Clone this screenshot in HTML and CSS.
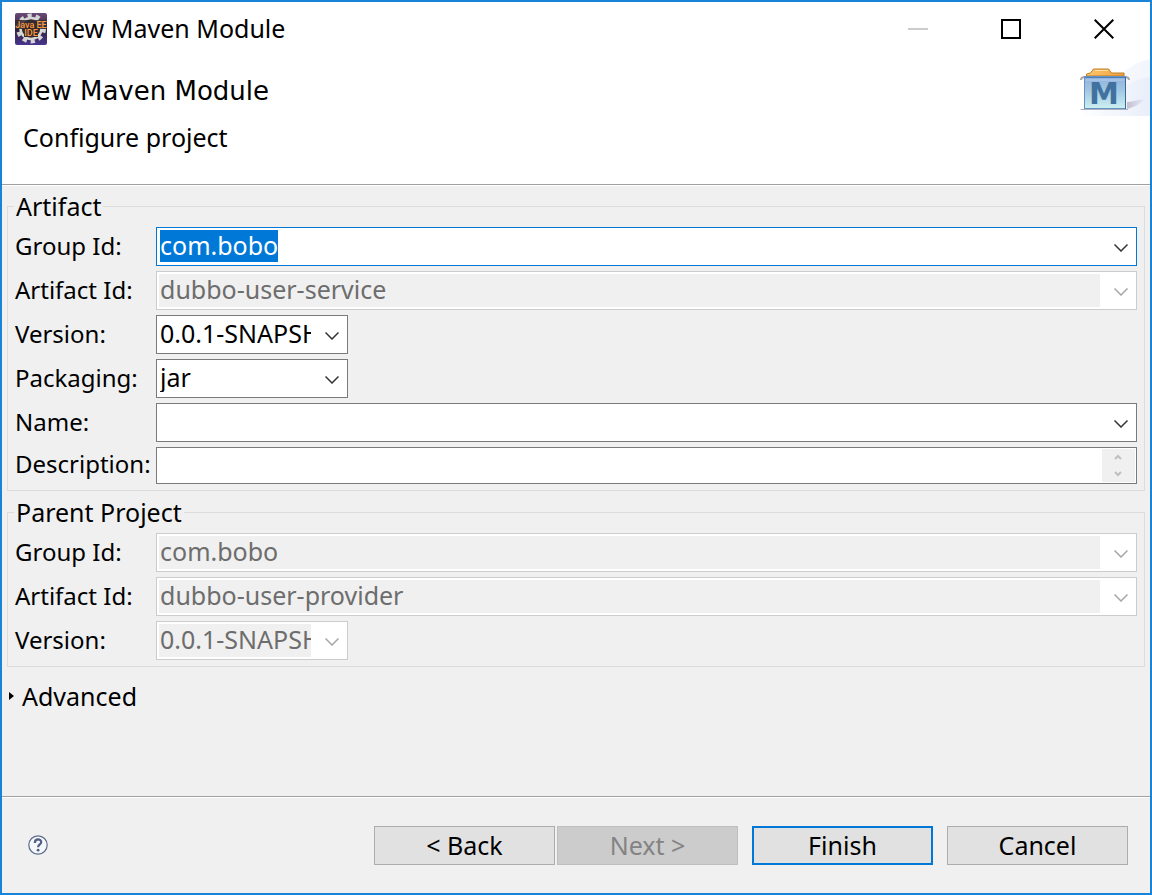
FILE: index.html
```html
<!DOCTYPE html>
<html lang="en">
<head>
    <meta charset="UTF-8">
    <meta name="viewport" content="width=device-width, initial-scale=1.0">
    <title>New Maven Module</title>
    <link rel="stylesheet" href="styles.css">
</head>
<body>
    <div class="window">
        <header class="titlebar">
            <svg class="app-icon" viewBox="0 0 32 32" width="32" height="32" aria-hidden="true">
                <defs>
                    <linearGradient id="appBg" x1="0" y1="0" x2="0" y2="1">
                        <stop offset="0" stop-color="#6b4a78"/>
                        <stop offset="0.5" stop-color="#2f2238"/>
                        <stop offset="1" stop-color="#4a3590"/>
                    </linearGradient>
                </defs>
                <rect width="32" height="32" rx="2" fill="url(#appBg)"/>
                <circle cx="16" cy="15.5" r="13" fill="none" stroke="#d4d4d4" stroke-width="4" stroke-dasharray="4.2 4"/>
                <circle cx="16" cy="15.5" r="10.5" fill="#2e2c30" stroke="#d8d8d8" stroke-width="2.5"/>
                <rect x="0" y="7" width="32" height="9" fill="#332a30" opacity="0.85"/>
                <rect x="9" y="15" width="14" height="9" fill="#332a30"/>
                <text class="app-icon-text" x="16" y="15" text-anchor="middle">Java EE</text>
                <text class="app-icon-text" x="16" y="23" text-anchor="middle">IDE</text>
            </svg>
            <span class="titlebar-text">New Maven Module</span>
            <div class="window-controls">
                <button type="button" class="control" aria-label="Minimize" disabled>
                    <svg viewBox="0 0 20 20" width="20" height="20"><rect x="0" y="9" width="20" height="2" fill="#cccccc"/></svg>
                </button>
                <button type="button" class="control" aria-label="Maximize">
                    <svg viewBox="0 0 20 20" width="20" height="20"><rect x="1" y="1" width="18" height="18" fill="none" stroke="#000" stroke-width="2"/></svg>
                </button>
                <button type="button" class="control" aria-label="Close">
                    <svg viewBox="0 0 20 20" width="20" height="20"><path d="M.7.7 19.3 19.3M19.3.7.7 19.3" stroke="#000" stroke-width="2"/></svg>
                </button>
            </div>
        </header>

        <div class="banner">
            <div class="banner-text">
                <h1>New Maven Module</h1>
                <p>Configure project</p>
            </div>
            <svg class="banner-image" viewBox="0 0 72 60" width="72" height="60" aria-hidden="true">
                <defs>
                    <linearGradient id="swoosh" x1="0" y1="0" x2="1" y2="0">
                        <stop offset="0" stop-color="#ffffff"/>
                        <stop offset="1" stop-color="#e9eefa"/>
                    </linearGradient>
                    <linearGradient id="box" x1="0" y1="0" x2="0" y2="1">
                        <stop offset="0" stop-color="#8fb0dc"/>
                        <stop offset="0.45" stop-color="#a3c8e4"/>
                        <stop offset="1" stop-color="#ccf0f0"/>
                    </linearGradient>
                    <linearGradient id="folder" x1="0" y1="0" x2="1" y2="0">
                        <stop offset="0" stop-color="#fbc66c"/>
                        <stop offset="1" stop-color="#f2a03c"/>
                    </linearGradient>
                    <linearGradient id="shadow" x1="0" y1="0" x2="1" y2="0">
                        <stop offset="0" stop-color="#c4bed2"/>
                        <stop offset="1" stop-color="#e9eefa"/>
                    </linearGradient>
                </defs>
                <path d="M0 60C26 50 36 10 72 3V60z" fill="url(#swoosh)" opacity="0.6"/>
                <path d="M0 60C32 54 36 26 72 21V60z" fill="url(#swoosh)"/>
                <path d="M49 46C56 46 60 43 67 43 62 48 57 51 49 53z" fill="url(#shadow)"/>
                <path d="M2 53h48v1H3z" fill="#aeb3c4"/>
                <path d="M3 24c0-2 1-3 4-3M51 24c0-2-1-3-4-3" fill="none" stroke="#a8a8a8" stroke-width="2"/>
                <path d="M8.500 20v-2l4-1 3-4h15l3 4h12.500v3z" fill="url(#folder)" stroke="#bd7d25"/>
                <path d="M17 14.500h13" stroke="#ffe2a8"/>
                <rect x="6.500" y="20.500" width="41" height="32" fill="url(#box)" stroke="#6593bd"/>
                <path d="M7 21.500h40" stroke="#4d7fb8"/>
                <path d="M8 24h38" stroke="#b5cfee"/>
                <path d="M47.500 21v32" stroke="#3b6997"/>
                <text class="banner-letter" x="26" y="48" text-anchor="middle">M</text>
            </svg>
        </div>

        <form class="content" id="moduleForm">
            <fieldset>
                <legend>Artifact</legend>
                <div class="grid">
                    <label for="groupId">Group Id:</label>
                    <div class="combo">
                        <input type="text" id="groupId" value="com.bobo" autocomplete="off" spellcheck="false">
                        <button type="button" aria-label="Show group ids"><svg viewBox="0 0 14 8" width="14" height="8"><path d="M.5.5 7 7 13.500.5"/></svg></button>
                    </div>

                    <label for="artifactId">Artifact Id:</label>
                    <div class="combo disabled">
                        <input type="text" id="artifactId" value="dubbo-user-service" disabled>
                        <button type="button" aria-label="Show artifact ids" disabled><svg viewBox="0 0 14 8" width="14" height="8"><path d="M.5.5 7 7 13.500.5"/></svg></button>
                    </div>

                    <label for="version">Version:</label>
                    <div class="combo short">
                        <input type="text" id="version" value="0.0.1-SNAPSHOT" autocomplete="off" spellcheck="false">
                        <button type="button" aria-label="Show versions"><svg viewBox="0 0 14 8" width="14" height="8"><path d="M.5.5 7 7 13.500.5"/></svg></button>
                    </div>

                    <label for="packaging">Packaging:</label>
                    <div class="combo short">
                        <select id="packaging">
                            <option selected>jar</option>
                            <option>pom</option>
                            <option>war</option>
                        </select>
                        <span class="arrow"><svg viewBox="0 0 14 8" width="14" height="8"><path d="M.5.5 7 7 13.500.5"/></svg></span>
                    </div>

                    <label for="name">Name:</label>
                    <div class="combo">
                        <input type="text" id="name" autocomplete="off">
                        <button type="button" aria-label="Show names"><svg viewBox="0 0 14 8" width="14" height="8"><path d="M.5.5 7 7 13.500.5"/></svg></button>
                    </div>

                    <label for="description" class="top">Description:</label>
                    <div class="multiline">
                        <textarea id="description" rows="1"></textarea>
                        <div class="scroller">
                            <button type="button" aria-label="Scroll up" disabled><svg viewBox="0 0 8 6" width="8" height="6"><path d="M1 5 4 2 7 5"/></svg></button>
                            <button type="button" aria-label="Scroll down" disabled><svg viewBox="0 0 8 6" width="8" height="6"><path d="M1 1 4 4 7 1"/></svg></button>
                        </div>
                    </div>
                </div>
            </fieldset>

            <fieldset>
                <legend>Parent Project</legend>
                <div class="grid">
                    <label for="parentGroupId">Group Id:</label>
                    <div class="combo disabled">
                        <input type="text" id="parentGroupId" value="com.bobo" disabled>
                        <button type="button" aria-label="Show parent group ids" disabled><svg viewBox="0 0 14 8" width="14" height="8"><path d="M.5.5 7 7 13.500.5"/></svg></button>
                    </div>

                    <label for="parentArtifactId">Artifact Id:</label>
                    <div class="combo disabled">
                        <input type="text" id="parentArtifactId" value="dubbo-user-provider" disabled>
                        <button type="button" aria-label="Show parent artifact ids" disabled><svg viewBox="0 0 14 8" width="14" height="8"><path d="M.5.5 7 7 13.500.5"/></svg></button>
                    </div>

                    <label for="parentVersion">Version:</label>
                    <div class="combo short disabled">
                        <input type="text" id="parentVersion" value="0.0.1-SNAPSHOT" disabled>
                        <button type="button" aria-label="Show parent versions" disabled><svg viewBox="0 0 14 8" width="14" height="8"><path d="M.5.5 7 7 13.500.5"/></svg></button>
                    </div>
                </div>
            </fieldset>

            <details class="advanced">
                <summary><svg viewBox="0 0 5 8" width="5" height="8"><path d="M0 0 5 4 0 8z"/></svg>Advanced</summary>
            </details>
        </form>

        <footer class="footer">
            <button type="button" class="help" aria-label="Help">
                <svg viewBox="0 0 20 20" width="20" height="20">
                    <circle cx="10" cy="10" r="9.200" fill="#f6f7fa" stroke="#5c6b8c" stroke-width="1.200"/>
                    <path d="M6.800 8C6.800 3.200 13.400 3.600 13.200 7.200 13.100 9.400 10.100 9.600 10.100 12.300" fill="none" stroke="#4f5f85" stroke-width="2.2"/>
                    <circle cx="10.100" cy="15.200" r="1.400" fill="#4f5f85"/>
                </svg>
            </button>
            <div class="buttons">
                <div class="pager">
                    <button type="button" class="btn">&lt; Back</button>
                    <button type="button" class="btn" disabled>Next &gt;</button>
                </div>
                <button type="submit" form="moduleForm" class="btn primary">Finish</button>
                <button type="button" class="btn">Cancel</button>
            </div>
        </footer>
    </div>

    <script>
        const groupId = document.getElementById('groupId');
        groupId.focus();
        groupId.select();
    </script>
</body>
</html>
```
FILE: styles.css
```css
* {
    box-sizing: border-box;
}

body {
    margin: 0;
    font-family: "Noto Sans", "Open Sans", sans-serif;
    font-size: 25px;
    line-height: 34px;
    color: #000;
}

button, input, select, textarea {
    margin: 0;
    padding: 0;
    border: none;
    border-radius: 0;
    outline: none;
    background: none;
    font: inherit;
    color: inherit;
}

svg {
    display: block;
    flex: none;
}

.window {
    display: flex;
    flex-direction: column;
    min-height: 100vh;
    border: 2px solid #1883d7;
    background: #f0f0f0;
}

.titlebar {
    display: flex;
    align-items: center;
    height: 54px;
    padding-left: 13px;
    background: #fff;
}

.app-icon-text {
    font-family: Roboto, sans-serif;
    font-size: 9px;
    font-weight: 500;
    fill: #ff9a3c;
}

.titlebar-text {
    margin-left: 5px;
    padding-bottom: 2px;
}

.window-controls {
    display: flex;
    margin-left: auto;
}

.control {
    display: flex;
    align-items: center;
    justify-content: center;
    width: 93px;
    height: 54px;
}

.banner {
    display: flex;
    justify-content: space-between;
    height: 128px;
    background: #fff;
}

.banner-text {
    padding: 18px 0 0 13px;
}

h1 {
    margin: 0;
    font-family: "DejaVu Sans", sans-serif;
    font-size: 26px;
    font-weight: normal;
    line-height: 34px;
}

.banner p {
    margin: 12px 0 0 8px;
}

.banner-letter {
    font-family: "DejaVu Sans", sans-serif;
    font-size: 30px;
    font-weight: bold;
    fill: #41719f;
}

.content {
    flex: 1;
    padding: 5px;
    border-top: 1px solid #a0a0a0;
    box-shadow: inset 0 1px #fff;
}

fieldset {
    min-width: 0;
    margin: 0 0 5px;
    padding: 5px 7px 6px;
    border: 1px solid #dcdcdc;
}

legend {
    margin-left: -1px;
    padding: 0 2px;
    line-height: 32px;
}

.grid {
    display: grid;
    grid-template-columns: 136px 1fr;
    gap: 5px;
    align-items: center;
}

label {
    padding-bottom: 1px;
    font-size: 24px;
}

.top {
    align-self: start;
}

.combo,
.multiline {
    display: flex;
    height: 39px;
    padding: 2px;
    border: 1px solid #7a7a7a;
    background: #fff;
}

.combo:focus-within {
    border-color: #0078d7;
}

.combo input,
.combo select {
    flex: 1;
    min-width: 0;
    height: 33px;
    padding: 0 0 3px 1px;
}

.combo select {
    appearance: none;
    line-height: 30px;
}

.combo input::selection {
    background: #0078d7;
    color: #fff;
}

.combo button,
.combo .arrow {
    display: flex;
    align-items: center;
    justify-content: center;
    width: 34px;
    padding: 2px 0 0 7px;
}

.combo path {
    fill: none;
    stroke: #333;
    stroke-width: 1.5;
}

.combo.disabled {
    border-color: #ccc;
    color: #6d6d6d;
}

.combo.disabled input {
    background: #f0f0f0;
}

.combo.disabled path {
    stroke: #a6a6a6;
}

.short {
    width: 192px;
}

.multiline {
    height: 37px;
    padding: 1px;
}

.multiline textarea {
    flex: 1;
    min-width: 0;
    overflow: hidden;
    resize: none;
}

.scroller {
    display: flex;
    flex-direction: column;
    width: 33px;
    padding-right: 2px;
    background: #f0f0f0;
}

.scroller button {
    display: flex;
    flex: 1;
    align-items: center;
    justify-content: center;
}

.scroller path {
    fill: none;
    stroke: #bfbfbf;
    stroke-width: 2;
}

.advanced {
    margin-top: 12px;
}

.advanced summary {
    display: flex;
    align-items: center;
    gap: 8px;
    padding-left: 2px;
    list-style: none;
}

.footer {
    display: flex;
    align-items: center;
    justify-content: space-between;
    height: 97px;
    padding: 0 22px 0 26px;
    border-top: 1px solid #a0a0a0;
    box-shadow: inset 0 1px #fff;
}

.buttons {
    display: flex;
    gap: 14px;
}

.pager {
    display: flex;
    gap: 2px;
}

.btn {
    width: 181px;
    height: 39px;
    border: 1px solid #adadad;
    background: #e1e1e1;
}

.btn:disabled {
    border-color: #bfbfbf;
    background: #ccc;
    color: #838383;
}

.btn.primary {
    border: 2px solid #0078d7;
}
```
